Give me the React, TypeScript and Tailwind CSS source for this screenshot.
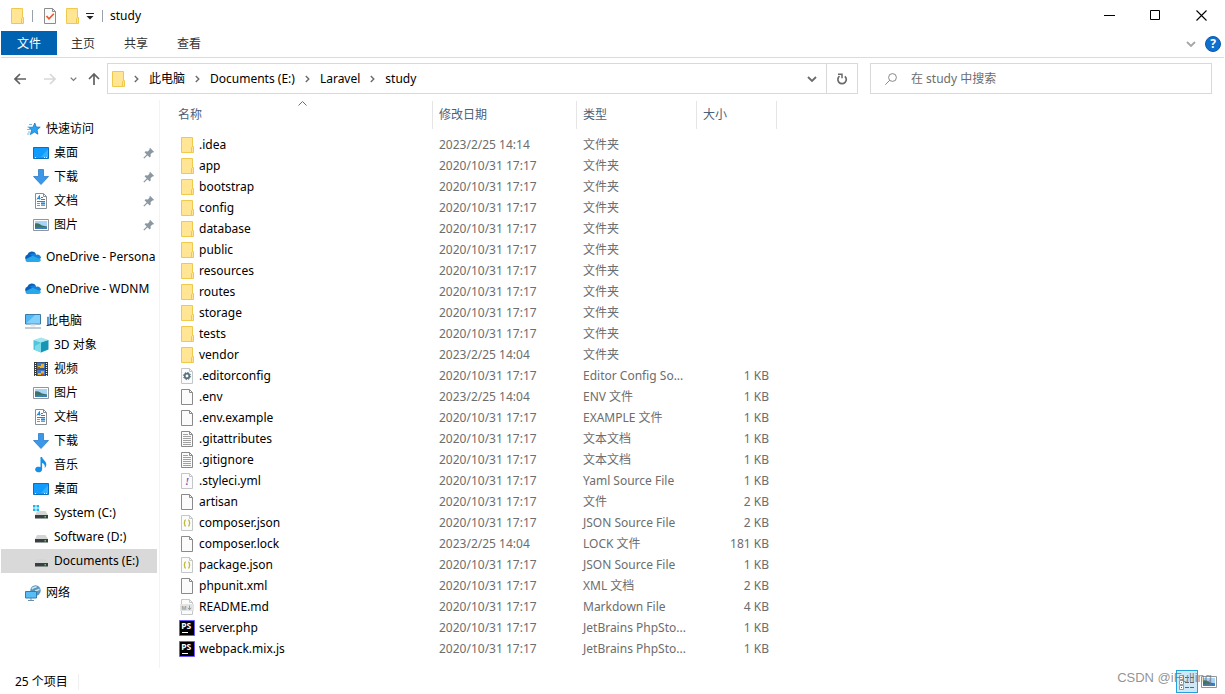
import { Fragment, type ReactNode } from "react";

type IconProps = { className?: string };

function FolderIcon({ className = "" }: IconProps) {
  return (
    <svg viewBox="0 0 14 16" className={`h-4 w-3.5 shrink-0 ${className}`}>
      <path d="M.5.5h11v15H.5z" fill="#ffe594" stroke="#efc94c" />
      <path d="M10.5 15.500v-5l1-1h1v6z" fill="#ffe594" stroke="#efc94c" />
    </svg>
  );
}

function PropertiesIcon() {
  return (
    <svg viewBox="0 0 12 16" className="h-4 w-3 shrink-0">
      <path d="M.5.500h8l3 3v12H.5z" fill="#fafafa" stroke="#8c8c8c" />
      <path d="M8.500.500v3h3" fill="none" stroke="#8c8c8c" />
      <path d="M2.500 8l2.500 2.800L9.800 5.800" fill="none" stroke="#e8562a" strokeWidth="1.600" />
    </svg>
  );
}

function ChevronRight() {
  return (
    <svg viewBox="0 0 5 8" className="h-2 w-[5px] shrink-0">
      <path d="M.8 1l3 3-3 3" fill="none" stroke="#6b6b6b" strokeWidth="1.400" />
    </svg>
  );
}

function ChevronDown({ className = "" }: IconProps) {
  return (
    <svg viewBox="0 0 10 6" className={className}>
      <path d="M1 1l4 4 4-4" fill="none" stroke="currentColor" strokeWidth="1.800" />
    </svg>
  );
}

function ArrowIcon({ className = "" }: IconProps) {
  return (
    <svg viewBox="0 0 12 12" className={`h-3 w-3 ${className}`}>
      <path d="M6 1L1 6l5 5M1 6h11" fill="none" stroke="currentColor" strokeWidth="1.700" />
    </svg>
  );
}

function StarIcon() {
  return (
    <svg viewBox="0 0 16 16" className="h-4 w-4">
      <path
        d="M9.800 2l1.400 4 4 .2-3.200 2.600.9 4.400L9.400 11l-4 2.600L6.600 9.200 3.800 6.400l4.200-.2z"
        fill="#29a3f2"
        stroke="#1579c4"
        strokeWidth=".8"
      />
      <path d="M4 3.500h3M2.500 6h2M2 8.500h3M3 11h2M2 13h2.500" stroke="#5fb4e8" strokeWidth=".9" />
    </svg>
  );
}

function DesktopIcon() {
  return (
    <svg viewBox="0 0 16 16" className="h-4 w-4">
      <path d="M.5 2.500h15v11H.5z" fill="#0f9bff" stroke="#0a6fb8" />
      <path d="M8 12L15 4v8z" fill="#35b0ff" />
      <path d="M2 12.500h1m8 0h1m1 0h1" stroke="#fff" />
    </svg>
  );
}

function DownloadIcon() {
  return (
    <svg viewBox="0 0 16 16" className="h-4 w-4">
      <path d="M5.500.500h5v7h5L8 15.500.500 7.500h5z" fill="#3b97e8" stroke="#2b7bc9" strokeWidth=".8" />
    </svg>
  );
}

function DocumentsIcon() {
  return (
    <svg viewBox="0 0 16 16" className="h-4 w-4">
      <path d="M2.500.500h8l3 3v12h-11z" fill="#fff" stroke="#8a8f94" />
      <path d="M10.500.500v3h3" fill="none" stroke="#8a8f94" />
      <path d="M4 6.500l2.500-4v4M4 5.500h3.500M8 4.500h2M8 6.500h4M4 8.500h8" fill="none" stroke="#1f86d8" />
      <path d="M4 10.500h3M4 12.500h3m1 0h4" stroke="#8d949a" />
      <path d="M8 9.500h4v2H8z" fill="#1f86d8" />
    </svg>
  );
}

function PicturesIcon() {
  return (
    <svg viewBox="0 0 16 16" className="h-4 w-4">
      <path d="M.5 2.500h15v11H.5z" fill="#fff" stroke="#8f979c" />
      <path d="M2 4h12v8H2z" fill="#a9d4f5" />
      <path d="M2 6.500c3-1 5 .500 7 2l5 1V12H2z" fill="#3e7368" />
      <path d="M2 10.500l12-.8V12H2z" fill="#3c7fc0" />
    </svg>
  );
}

function CloudIcon() {
  return (
    <svg viewBox="0 0 16 16" className="h-4 w-4">
      <path d="M3 12A3.200 3.200 0 0 1 2.300 5.800 4.800 4.800 0 0 1 11 5L6 12z" fill="#0a5fb8" />
      <path d="M5 5.500c2.500-1.500 5-1 6.300.3A3.400 3.400 0 0 1 16 9l-3 2z" fill="#1283d8" />
      <path d="M2.500 13C.2 12.800 0 10.800 1.500 9.800l5-2.500c1-.6 2-.3 3 .3l6.300 3c.2 1.400-.8 2.400-2.300 2.400z" fill="#28a8ea" />
    </svg>
  );
}

function ComputerIcon() {
  return (
    <svg viewBox="0 0 16 16" className="h-4 w-4">
      <path d="M.5 1.500h15v9.500H.5z" fill="#4fb7f5" stroke="#3b7ba8" />
      <path d="M1 10.500L10 2h5v8.500z" fill="#82d0fb" />
      <path d="M5.500 11.500h5v2h-5z" fill="#dfe6eb" />
      <path d="M0 15h16" stroke="#8197a8" />
    </svg>
  );
}

function CubeIcon() {
  return (
    <svg viewBox="0 0 16 16" className="h-4 w-4">
      <path d="M8 .5l7.500 2.500L8 5.500.500 3z" fill="#a3e6f2" />
      <path d="M.5 3L8 5.500v10l-7.500-3z" fill="#4cc6dc" />
      <path d="M15.500 3L8 5.500v10l7.500-3z" fill="#1796b3" />
      <path d="M2 9l6-3.500v10l-6-2.500z" fill="#7fdbe9" />
    </svg>
  );
}

function VideoIcon() {
  return (
    <svg viewBox="0 0 16 16" className="h-4 w-4">
      <path d="M1 1h14v14H1z" fill="#33383d" />
      <path d="M4 1.500h8v6H4zM4 8.500h8v6H4z" fill="#3f79c9" />
      <path d="M5 5h3V3h3v4H5zM5 12h3v-2h3v4H5z" fill="#e6b42b" />
      <path d="M4 6h3v1.500H4zM8 12.500h3v2H8z" fill="#c8452f" />
      <path d="M2.500 2v13M13.500 2v13" stroke="#f5f5f5" strokeWidth="1.200" strokeDasharray="1 1" />
    </svg>
  );
}

function MusicIcon() {
  return (
    <svg viewBox="0 0 16 16" className="h-4 w-4">
      <path
        d="M7.500 0h1.600c.2 2.500 4.400 4 4.200 7.500 0 1.500-.7 2.500-1.500 3.500.5-3-1-4.500-2.700-5v6.500a3.500 2.800 0 1 1-1.600-2.400z"
        fill="#1590e8"
      />
    </svg>
  );
}

function DriveIcon({ windows = false }: { windows?: boolean }) {
  return (
    <svg viewBox="0 0 16 16" className="h-4 w-4">
      {windows && (
        <path d="M0 0h2.500v2.500H0zM3.500 0H6v2.500H3.500zM0 3.500h2.500V6H0zM3.500 3.500H6V6H3.500z" fill="#19b5f1" />
      )}
      <path d="M4 6h8.500l2.500 4H2z" fill="#d3d5d7" />
      <path d="M2 10h13v3.500H2z" fill="#3c3f41" />
      <path d="M11.500 11h1.500v1.500h-1.500z" fill="#3fe03a" />
    </svg>
  );
}

function NetworkIcon() {
  return (
    <svg viewBox="0 0 16 16" className="h-4 w-4">
      <circle cx="10.500" cy="5.500" r="5.200" fill="#5b96ba" />
      <path d="M7 4c2-3 3-1 4.500-2.500M10 6c2 0 3-2 4.500-1.500" fill="none" stroke="#cfe5f1" strokeWidth="1.500" />
      <path d="M.5 6.500h11v6.500H.5z" fill="#58bdf7" stroke="#2f7fb5" />
      <path d="M3 15.500h6M6 13v2" stroke="#6f8da3" />
    </svg>
  );
}

function PinIcon() {
  return (
    <svg viewBox="0 0 12 12" className="h-3 w-3 shrink-0">
      <path
        d="M7 .8L11.200 5l-1.200.6-.6-.2-1.800 1.800.1 2.300-1 1L1.500 5.300l1-1 2.300.1 1.800-1.800-.2-.6z"
        fill="#8c98a1"
      />
      <path d="M4.500 7.500L.8 11.200" stroke="#8c98a1" strokeWidth="1.200" />
    </svg>
  );
}

type FileKind = "folder" | "config" | "blank" | "text" | "yaml" | "json" | "markdown" | "phpstorm";

function FileIcon({ kind }: { kind: FileKind }) {
  if (kind === "folder") return <FolderIcon className="ml-0.5" />;
  if (kind === "phpstorm") {
    return (
      <svg viewBox="0 0 16 16" className="h-4 w-4 shrink-0">
        <path d="M.5.500h15v15H.5z" fill="#000" stroke="#6b57ff" />
        <text x="2.200" y="8.800" fontSize="8.500" fontWeight="700" fontFamily="Noto Sans" fill="#fff">
          PS
        </text>
        <path d="M3 12.500h6" stroke="#fff" />
      </svg>
    );
  }
  const plain = kind === "blank" || kind === "text";
  const stroke = plain ? "#8a8a8a" : "#c4c7c9";
  return (
    <svg viewBox="0 0 16 16" className="h-4 w-4 shrink-0">
      <path d="M2.500.500h8l3 3v12h-11z" fill="#fbfbfb" stroke={stroke} />
      <path d="M10.500.500v3h3" fill="none" stroke={stroke} />
      {kind === "text" && <path d="M4 3.500h5M4 5.500h8M4 7.500h8M4 9.500h8M4 11.500h8M4 13.500h8" stroke="#a0a0a0" />}
      {kind === "config" && (
        <>
          <circle cx="8" cy="8" r="2.300" fill="none" stroke="#546e7a" strokeWidth="1.700" />
          <circle cx="8" cy="8" r="3.600" fill="none" stroke="#546e7a" strokeDasharray="1.400 1.420" />
        </>
      )}
      {kind === "yaml" && (
        <text
          x="6"
          y="12"
          fontSize="11"
          fontStyle="italic"
          fontWeight="700"
          fontFamily="Liberation Serif"
          fill="#8e4fc0"
        >
          !
        </text>
      )}
      {kind === "json" && (
        <path
          d="M7 5H6.500q-.8 0-.8 1v1q0 1-1 1 1 0 1 1v1q0 1 .8 1H7M9 5h.5q.8 0 .8 1v1q0 1 1 1-1 0-1 1v1q0 1-.8 1H9"
          fill="none"
          stroke="#bdb83a"
          strokeWidth="1.200"
        />
      )}
      {kind === "markdown" && (
        <>
          <path d="M1 5h14v7H1z" fill="#e4e4e4" />
          <text x="2.500" y="11" fontSize="6" fontWeight="700" fontFamily="Liberation Sans" fill="#9c9c9c">
            M
          </text>
          <path d="M10.500 6.500v4M8.800 8.800l1.700 2 1.700-2" fill="none" stroke="#9c9c9c" />
        </>
      )}
    </svg>
  );
}

type NavItem = { label: string; icon: ReactNode; pinned?: boolean; active?: boolean };

const navGroups: { head: NavItem; items: NavItem[] }[] = [
  {
    head: { label: "快速访问", icon: <StarIcon /> },
    items: [
      { label: "桌面", icon: <DesktopIcon />, pinned: true },
      { label: "下载", icon: <DownloadIcon />, pinned: true },
      { label: "文档", icon: <DocumentsIcon />, pinned: true },
      { label: "图片", icon: <PicturesIcon />, pinned: true },
    ],
  },
  { head: { label: "OneDrive - Persona", icon: <CloudIcon /> }, items: [] },
  { head: { label: "OneDrive - WDNM", icon: <CloudIcon /> }, items: [] },
  {
    head: { label: "此电脑", icon: <ComputerIcon /> },
    items: [
      { label: "3D 对象", icon: <CubeIcon /> },
      { label: "视频", icon: <VideoIcon /> },
      { label: "图片", icon: <PicturesIcon /> },
      { label: "文档", icon: <DocumentsIcon /> },
      { label: "下载", icon: <DownloadIcon /> },
      { label: "音乐", icon: <MusicIcon /> },
      { label: "桌面", icon: <DesktopIcon /> },
      { label: "System (C:)", icon: <DriveIcon windows /> },
      { label: "Software (D:)", icon: <DriveIcon /> },
      { label: "Documents (E:)", icon: <DriveIcon />, active: true },
    ],
  },
  { head: { label: "网络", icon: <NetworkIcon /> }, items: [] },
];

type FileRow = { name: string; kind: FileKind; date: string; type: string; size?: string };

const OLD = "2020/10/31 17:17";

const files: FileRow[] = [
  { name: ".idea", kind: "folder", date: "2023/2/25 14:14", type: "文件夹" },
  { name: "app", kind: "folder", date: OLD, type: "文件夹" },
  { name: "bootstrap", kind: "folder", date: OLD, type: "文件夹" },
  { name: "config", kind: "folder", date: OLD, type: "文件夹" },
  { name: "database", kind: "folder", date: OLD, type: "文件夹" },
  { name: "public", kind: "folder", date: OLD, type: "文件夹" },
  { name: "resources", kind: "folder", date: OLD, type: "文件夹" },
  { name: "routes", kind: "folder", date: OLD, type: "文件夹" },
  { name: "storage", kind: "folder", date: OLD, type: "文件夹" },
  { name: "tests", kind: "folder", date: OLD, type: "文件夹" },
  { name: "vendor", kind: "folder", date: "2023/2/25 14:04", type: "文件夹" },
  { name: ".editorconfig", kind: "config", date: OLD, type: "Editor Config So...", size: "1 KB" },
  { name: ".env", kind: "blank", date: "2023/2/25 14:04", type: "ENV 文件", size: "1 KB" },
  { name: ".env.example", kind: "blank", date: OLD, type: "EXAMPLE 文件", size: "1 KB" },
  { name: ".gitattributes", kind: "text", date: OLD, type: "文本文档", size: "1 KB" },
  { name: ".gitignore", kind: "text", date: OLD, type: "文本文档", size: "1 KB" },
  { name: ".styleci.yml", kind: "yaml", date: OLD, type: "Yaml Source File", size: "1 KB" },
  { name: "artisan", kind: "blank", date: OLD, type: "文件", size: "2 KB" },
  { name: "composer.json", kind: "json", date: OLD, type: "JSON Source File", size: "2 KB" },
  { name: "composer.lock", kind: "blank", date: "2023/2/25 14:04", type: "LOCK 文件", size: "181 KB" },
  { name: "package.json", kind: "json", date: OLD, type: "JSON Source File", size: "1 KB" },
  { name: "phpunit.xml", kind: "blank", date: OLD, type: "XML 文档", size: "2 KB" },
  { name: "README.md", kind: "markdown", date: OLD, type: "Markdown File", size: "4 KB" },
  { name: "server.php", kind: "phpstorm", date: OLD, type: "JetBrains PhpSto...", size: "1 KB" },
  { name: "webpack.mix.js", kind: "phpstorm", date: OLD, type: "JetBrains PhpSto...", size: "1 KB" },
];

const crumbs = ["此电脑", "Documents (E:)", "Laravel", "study"];
const tabs = ["主页", "共享", "查看"];

function TitleBar() {
  return (
    <header className="flex h-[31px] items-center">
      <div className="flex flex-1 items-center pl-2.5">
        <FolderIcon />
        <span className="ml-[7px] h-3 w-px bg-gray-400" />
        <button type="button" aria-label="属性" className="ml-[11px]">
          <PropertiesIcon />
        </button>
        <button type="button" aria-label="新建文件夹" className="ml-2.5">
          <FolderIcon />
        </button>
        <button type="button" aria-label="自定义快速访问工具栏" className="ml-1.5">
          <svg viewBox="0 0 8 8" className="h-2 w-2">
            <path d="M0 1.500h8" stroke="#222" />
            <path d="M.5 4h7L4 7.500z" fill="#222" />
          </svg>
        </button>
        <span className="ml-2 h-3 w-px bg-gray-400" />
        <h1 className="ml-[7px]">study</h1>
      </div>
      <button type="button" aria-label="最小化" className="flex h-full w-[46px] items-center justify-center">
        <svg viewBox="0 0 11 11" className="h-[11px] w-[11px]">
          <path d="M0 5.500h11" stroke="#000" />
        </svg>
      </button>
      <button type="button" aria-label="最大化" className="flex h-full w-[46px] items-center justify-center">
        <svg viewBox="0 0 11 11" className="h-[11px] w-[11px]">
          <path d="M.5.500h9v9H.5z" fill="none" stroke="#000" />
        </svg>
      </button>
      <button type="button" aria-label="关闭" className="flex h-full w-[46px] items-center justify-center">
        <svg viewBox="0 0 11 11" className="h-[11px] w-[11px]">
          <path d="M.5.500l10 10M10.500.500l-10 10" stroke="#000" strokeWidth="1.100" />
        </svg>
      </button>
    </header>
  );
}

function Ribbon() {
  return (
    <div className="flex h-[27px] items-start border-b border-[#dadbdc]">
      <button type="button" className="h-6 w-14 bg-[#0063b1] pt-px text-white">
        文件
      </button>
      {tabs.map((tab) => (
        <button key={tab} type="button" className="h-6 pt-px pr-[15px] pl-3.5 text-[#333]">
          {tab}
        </button>
      ))}
      <div className="ml-auto flex h-[26px] items-center gap-[9px] pr-[3px]">
        <button type="button" aria-label="展开功能区">
          <ChevronDown className="h-1.5 w-2.5 text-[#a6a6a6]" />
        </button>
        <button
          type="button"
          aria-label="帮助"
          className="h-4 w-4 rounded-full border border-[#0a5ca8] bg-[#0f6fcf] text-xs leading-[14px] font-bold text-white"
        >
          ?
        </button>
      </div>
    </div>
  );
}

function AddressBar() {
  return (
    <div className="flex h-[42px] items-start pt-[5px] pr-3">
      <nav className="flex h-[31px] w-[106px] shrink-0 items-center pl-[13px]">
        <button type="button" aria-label="后退" className="text-[#606060]">
          <ArrowIcon />
        </button>
        <button type="button" aria-label="前进" className="ml-[18px] text-[#d8d8d8]">
          <ArrowIcon className="rotate-180" />
        </button>
        <button type="button" aria-label="最近的位置" className="ml-3.5">
          <ChevronDown className="h-1.5 w-[7px] text-[#777]" />
        </button>
        <button type="button" aria-label="上移" className="ml-[11px] text-[#606060]">
          <ArrowIcon className="rotate-90" />
        </button>
      </nav>
      <div className="flex h-[31px] min-w-0 flex-1 items-stretch border border-[#d9d9d9]">
        <div className="flex min-w-0 flex-1 items-center overflow-hidden pl-1">
          <FolderIcon />
          <span className="ml-2 flex items-center gap-2.5 whitespace-nowrap">
            {crumbs.map((crumb) => (
              <Fragment key={crumb}>
                <ChevronRight />
                <button type="button">{crumb}</button>
              </Fragment>
            ))}
          </span>
        </div>
        <button type="button" aria-label="以前的位置" className="flex w-7 items-center justify-center">
          <ChevronDown className="h-1.5 w-2.5 text-[#6b6b6b]" />
        </button>
        <button
          type="button"
          aria-label="刷新"
          className="flex w-[31px] items-center justify-center border-l border-[#d9d9d9]"
        >
          <svg viewBox="0 0 12 12" className="h-3 w-3">
            <path d="M3.500 3.200A4.200 4.200 0 1 0 8.800 3.300" fill="none" stroke="#6b6b6b" strokeWidth="1.700" />
            <path d="M2 1.200h4v4" fill="none" stroke="#6b6b6b" strokeWidth="1.500" />
          </svg>
        </button>
      </div>
      <label className="ml-3 flex h-[31px] w-[342px] shrink-0 items-center border border-[#d9d9d9] pl-3.5">
        <svg viewBox="0 0 12 12" className="h-3 w-3 shrink-0">
          <circle cx="7.500" cy="4.500" r="3.900" fill="none" stroke="#7a7a7a" strokeWidth=".9" />
          <path d="M4.700 7.300L.3 11.700" stroke="#7a7a7a" strokeWidth=".9" />
        </svg>
        <input
          type="search"
          aria-label="搜索"
          placeholder="在 study 中搜索"
          className="ml-3.5 min-w-0 flex-1 outline-none placeholder:text-[#6d6d6d]"
        />
      </label>
    </div>
  );
}

function NavRow({ item, nested = false }: { item: NavItem; nested?: boolean }) {
  return (
    <a
      href="#"
      className={`flex h-6 items-center gap-[5px] pr-0.5 whitespace-nowrap ${nested ? "pl-8" : "pl-6"} ${
        item.active ? "bg-[#d9d9d9]" : ""
      }`}
    >
      <span className="shrink-0">{item.icon}</span>
      <span className="flex-1">{item.label}</span>
      {item.pinned && <PinIcon />}
    </a>
  );
}

function Sidebar() {
  return (
    <aside className="flex w-[159px] shrink-0 flex-col gap-2 border-r border-[#f3f3f3] pt-[17px] pr-0.5">
      {navGroups.map((group) => (
        <div key={group.head.label}>
          <NavRow item={group.head} />
          {group.items.map((item) => (
            <NavRow key={item.label} item={item} nested />
          ))}
        </div>
      ))}
    </aside>
  );
}

function HeaderCell({ children, first = false }: { children: ReactNode; first?: boolean }) {
  return (
    <th className="relative pb-[5px] text-left font-normal text-[#4c607a]">
      <div className={`flex h-7 items-center border-r border-[#e5e5e5] ${first ? "pl-[18px]" : "pl-1.5"}`}>
        {children}
      </div>
      {first && (
        <svg viewBox="0 0 9 5" className="absolute top-0 left-1/2 ml-px h-[5px] w-[9px]">
          <path d="M.5 4.500l4-4 4 4" fill="none" stroke="#6d6d6d" />
        </svg>
      )}
    </th>
  );
}

function FileTable() {
  return (
    <main className="min-w-0 flex-1 pt-px">
      <table className="w-[617px] table-fixed border-collapse">
        <colgroup>
          <col className="w-[273px]" />
          <col className="w-36" />
          <col className="w-[120px]" />
          <col className="w-20" />
        </colgroup>
        <thead>
          <tr>
            <HeaderCell first>名称</HeaderCell>
            <HeaderCell>修改日期</HeaderCell>
            <HeaderCell>类型</HeaderCell>
            <HeaderCell>大小</HeaderCell>
          </tr>
        </thead>
        <tbody className="text-[#6d6d6d]">
          {files.map((file) => (
            <tr key={file.name} className="h-[21px] whitespace-nowrap">
              <td className="p-0 pl-[19px] text-black">
                <div className="flex items-center">
                  <span className="w-5">
                    <FileIcon kind={file.kind} />
                  </span>
                  {file.name}
                </div>
              </td>
              <td className="p-0 pl-1.5">{file.date}</td>
              <td className="p-0 pl-1.5">{file.type}</td>
              <td className="p-0 pr-2 text-right">{file.size}</td>
            </tr>
          ))}
        </tbody>
      </table>
    </main>
  );
}

function StatusBar() {
  return (
    <footer className="relative flex h-[26px] items-center pt-px pr-[7px] pl-3.5">
      <span>25 个项目</span>
      <span className="ml-2.5 h-4 w-px bg-[#f0f0f0]" />
      <button
        type="button"
        aria-label="详细信息"
        className="ml-auto flex h-[23px] w-[22px] items-center justify-center border border-[#26a0da] bg-[#cce8f9]"
      >
        <svg viewBox="0 0 16 16" className="h-4 w-4">
          <path d="M.5 1.500h4v4h-4zM.5 6.500h4v4h-4zM.5 11.500h4v4h-4z" fill="#fff" stroke="#999" />
          <path d="M2 3.500h1" stroke="#4a8" />
          <path d="M2 8.500h1" stroke="#39c" />
          <path d="M2 13.500h1" stroke="#c33" />
          <path d="M6 3.500h4m1 0h4M6 8.500h4m1 0h4M6 13.500h4m1 0h4" stroke="#666" />
        </svg>
      </button>
      <button type="button" aria-label="大缩略图" className="ml-[3px]">
        <PicturesIcon />
      </button>
      <span className="absolute right-3 bottom-1.5 font-['Liberation_Sans'] text-[13px] leading-5 text-[#777]/80">
        CSDN @iFulling
      </span>
    </footer>
  );
}

export default function App() {
  return (
    <div className="flex min-h-screen flex-col bg-white pr-px pl-px font-['Noto_Sans','Noto_Sans_CJK_SC',sans-serif] text-xs leading-4 text-black">
      <TitleBar />
      <Ribbon />
      <AddressBar />
      <div className="flex flex-1">
        <Sidebar />
        <FileTable />
      </div>
      <StatusBar />
    </div>
  );
}
